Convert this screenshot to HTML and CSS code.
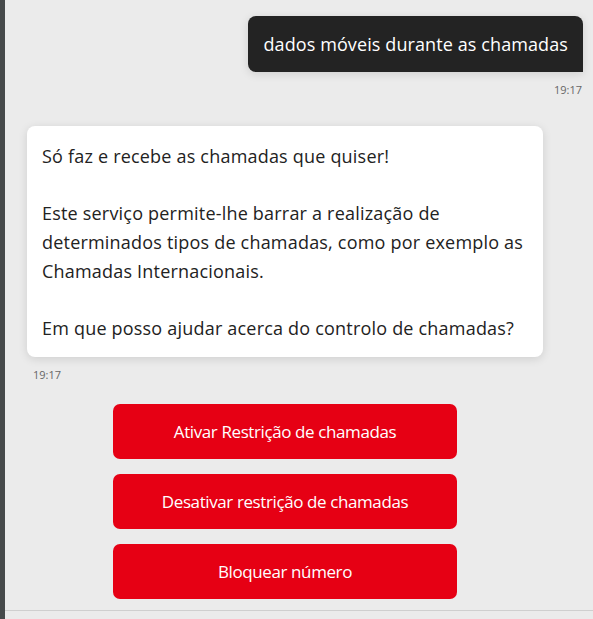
FILE: index.html
```html
<!DOCTYPE html>
<html lang="pt">
<head>
<meta charset="utf-8">
<link rel="stylesheet" href="styles.css">
</head>
<body>
<div class="app">
  <div class="rail"></div>
  <div class="chat">
    <div class="msgs">
      <div class="row user">
        <div class="bubble dark">dados móveis durante as chamadas</div>
        <div class="time">19:17</div>
      </div>
      <div class="row bot">
        <div class="bubble light">
          <p>Só faz e recebe as chamadas que quiser!</p>
          <p>Este serviço permite-lhe barrar a realização de determinados tipos de chamadas, como por exemplo as Chamadas Internacionais.</p>
          <p>Em que posso ajudar acerca do controlo de chamadas?</p>
        </div>
        <div class="time">19:17</div>
      </div>
      <div class="options">
        <button class="opt">Ativar Restrição de chamadas</button>
        <button class="opt">Desativar restrição de chamadas</button>
        <button class="opt">Bloquear número</button>
      </div>
    </div>
    <div class="footer"></div>
  </div>
</div>
</body>
</html>
```
FILE: styles.css
```css
html, body {
  margin: 0;
  padding: 0;
  height: 100%;
}
body {
  background: #ebebeb;
  font-family: "Open Sans", sans-serif;
  overflow: hidden;
}
.app {
  display: flex;
  height: 619px;
}
.rail {
  width: 5px;
  background: #464a4b;
  flex: none;
}
.chat {
  flex: 1;
  display: flex;
  flex-direction: column;
}
.msgs {
  flex: 1;
  padding: 16px 10px 0 22px;
}
.row {
  display: flex;
  flex-direction: column;
}
.row.user {
  align-items: flex-end;
}
.row.bot {
  align-items: flex-start;
  margin-top: 29px;
}
.bubble {
  font-size: 18px;
  letter-spacing: 0.2px;
  box-shadow: 0 2px 10px rgba(0, 0, 0, 0.12);
}
.bubble.dark {
  background: #232323;
  color: #fff;
  border-radius: 8px 8px 0 8px;
  padding: 0 15px;
  height: 56px;
  line-height: 56px;
  box-sizing: border-box;
  letter-spacing: 0.1px;
}
.bubble.light {
  background: #fff;
  color: #222;
  border-radius: 8px;
  width: 516px;
  box-sizing: border-box;
  padding: 16px 14px 14px 15px;
  line-height: 28.7px;
}
.bubble.light p {
  margin: 0;
}
.bubble.light p + p {
  margin-top: 28.7px;
}
.time {
  font-size: 11px;
  color: #666;
  margin-top: 10px;
}
.row.user .time {
  margin-top: 10px;
  margin-right: 1px;
}
.row.bot .time {
  margin-left: 6px;
  margin-top: 10px;
}
.options {
  display: flex;
  flex-direction: column;
  gap: 15px;
  margin-top: 22px;
  padding-left: 86px;
}
.opt {
  width: 344px;
  height: 55px;
  border: none;
  border-radius: 7px;
  background: #e60014;
  color: #fff;
  font-family: "Open Sans", sans-serif;
  font-size: 17px;
  letter-spacing: -0.4px;
  padding: 0;
}
.footer {
  height: 8px;
  border-top: 1px solid #cfcfcf;
}
```
